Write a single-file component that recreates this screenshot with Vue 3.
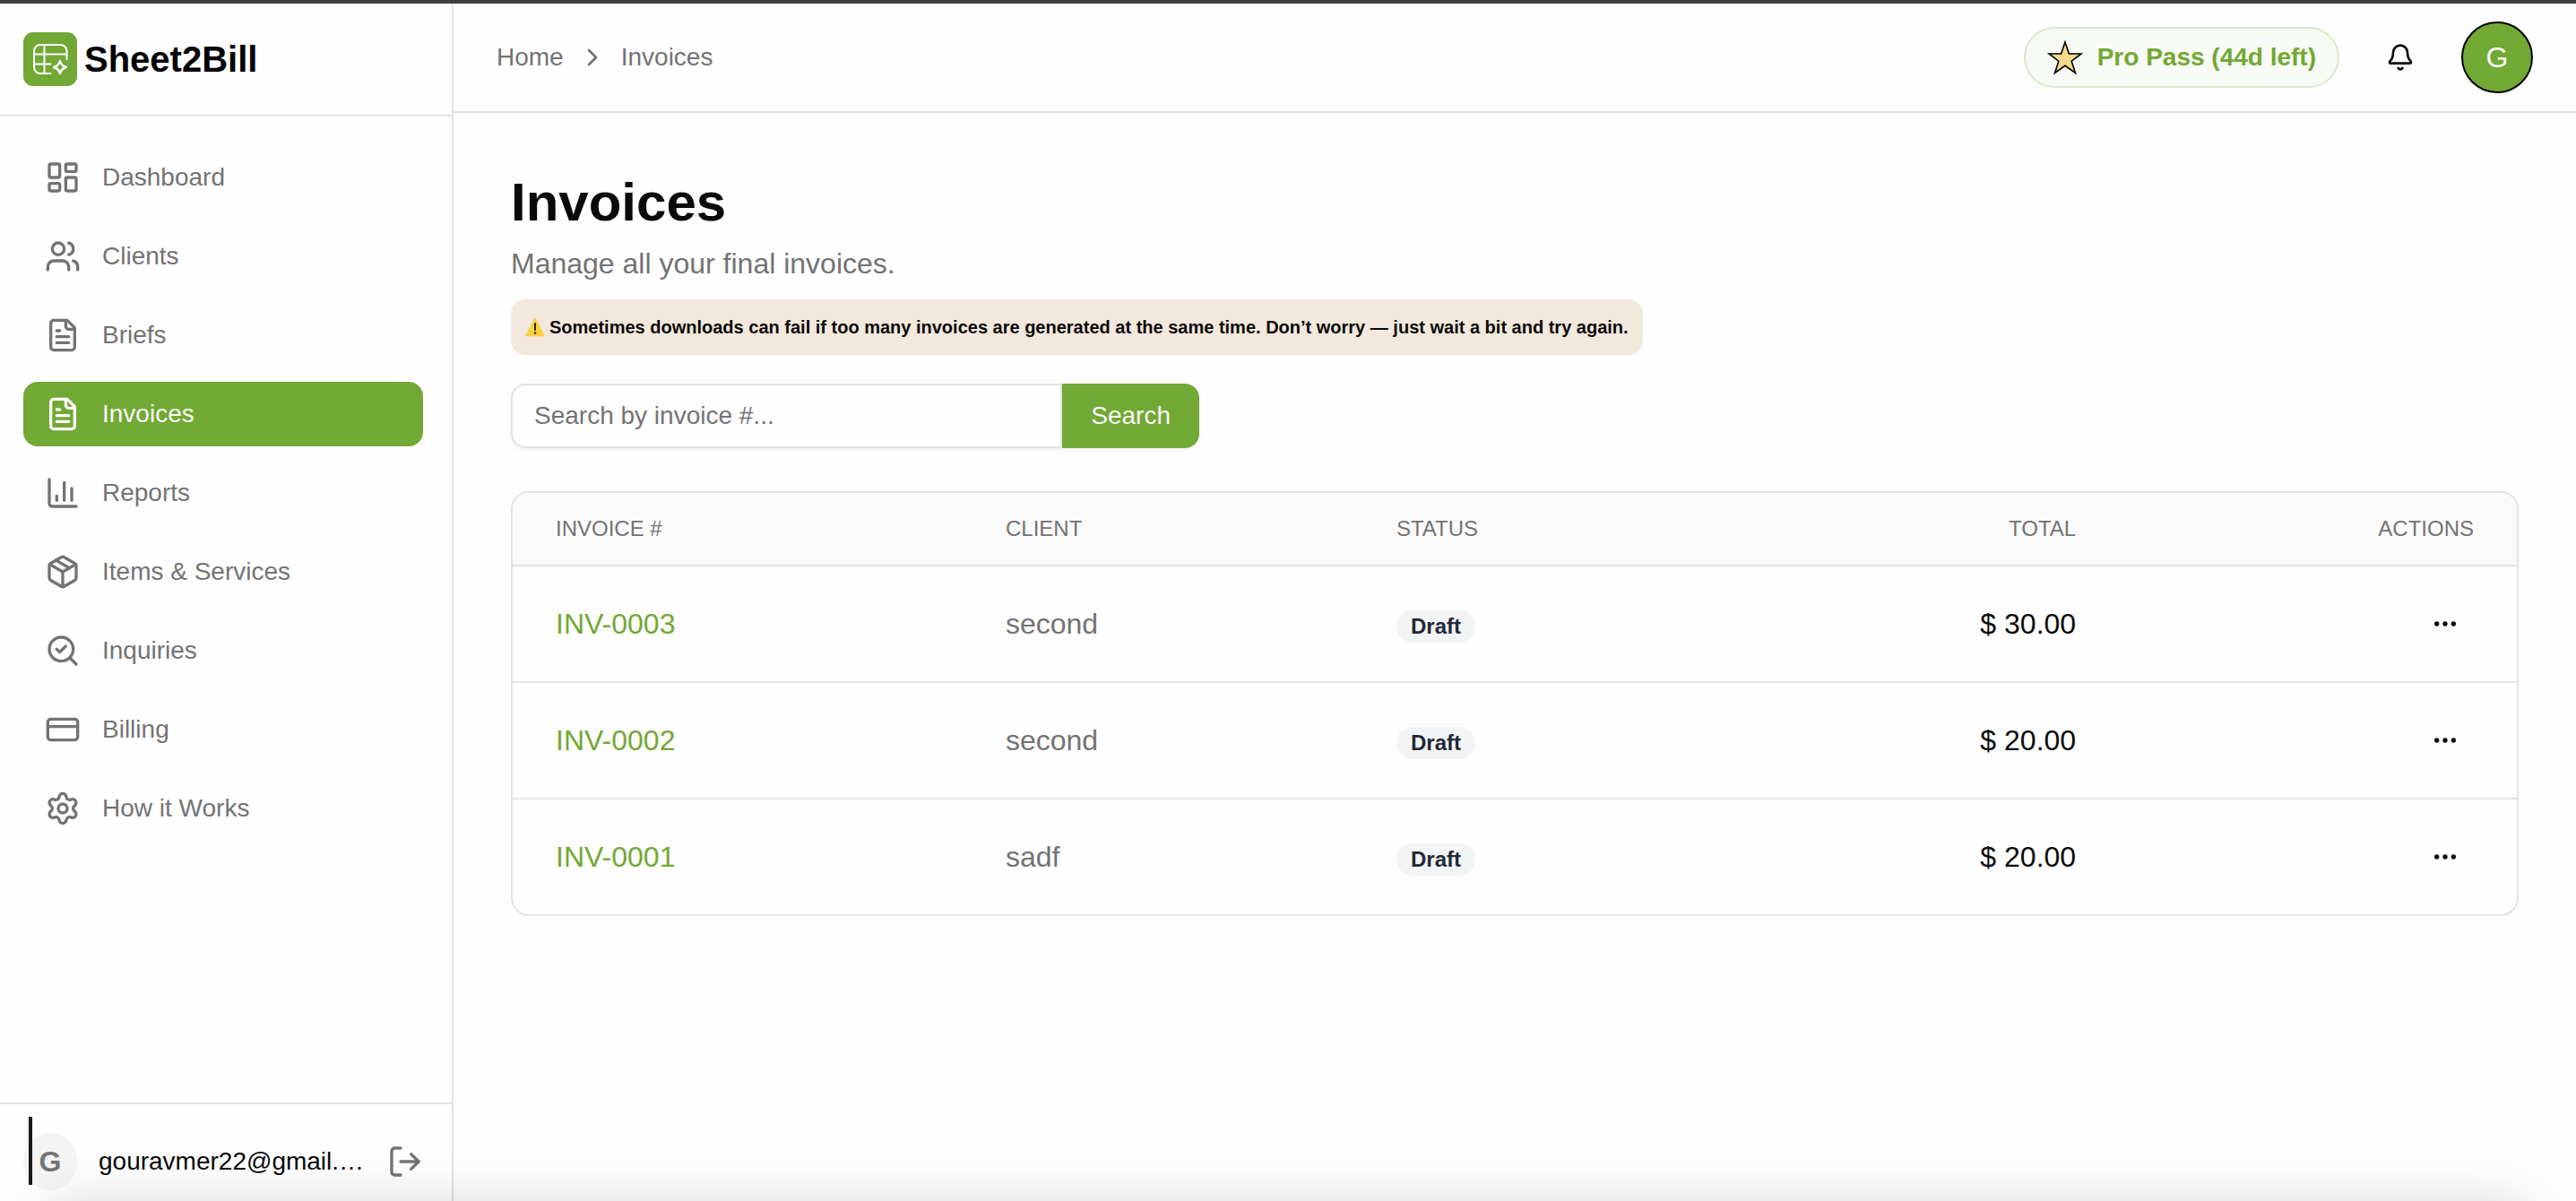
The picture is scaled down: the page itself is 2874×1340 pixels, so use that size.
<template>
  <div class="layout">
    <aside class="sidebar">
      <div class="brand">
        <svg class="brand-logo" viewBox="0 0 60 60" fill="none" stroke="#fff" stroke-width="2" stroke-linecap="round" stroke-linejoin="round">
          <rect width="60" height="60" rx="11" fill="#72a834" stroke="none" />
          <path d="M48.5 30V21a7 7 0 0 0-7-7H19a7 7 0 0 0-7 7V39a7 7 0 0 0 7 7H30.5" />
          <path d="M12 24.5H48.5M12 35.5H30.5M23.5 14V46" />
          <path d="M41 32q1.500 5.500 7 7q-5.500 1.500-7 7q-1.500-5.500-7-7q5.500-1.500 7-7z" stroke-width="2.4" />
        </svg>
        <span class="brand-name">Sheet2Bill</span>
      </div>

      <nav class="nav">
        <a v-for="item in navItems" :key="item.label" href="#" class="nav-item" :class="{ active: item.label === current }">
          <svg class="icon" viewBox="0 0 24 24"><path v-for="d in item.paths" :key="d" :d="d" /></svg>
          <span>{{ item.label }}</span>
        </a>
      </nav>

      <div class="account">
        <div class="account-avatar">G</div>
        <span class="caret"></span>
        <span class="account-email">{{ email }}</span>
        <button class="icon-btn" type="button" aria-label="Log out">
          <svg class="icon" viewBox="0 0 24 24">
            <path d="m16 17 5-5-5-5" /><path d="M21 12H9" /><path d="M9 21H5a2 2 0 0 1-2-2V5a2 2 0 0 1 2-2h4" />
          </svg>
        </button>
      </div>
    </aside>

    <div class="page">
      <header class="topbar">
        <nav class="crumbs" aria-label="Breadcrumb">
          <a href="#">Home</a>
          <svg class="icon icon-sm" viewBox="0 0 24 24"><path d="m9 18 6-6-6-6" /></svg>
          <a href="#">Invoices</a>
        </nav>
        <div class="topbar-right">
          <div class="pass">
            <svg class="star" viewBox="0 0 40 40">
              <path d="M20 3l4.400 13H38L27.200 24.200 31.500 37.500 20 29.300 8.500 37.500 12.800 24.200 2 16H15.600z" />
            </svg>
            <span>Pro Pass (44d left)</span>
          </div>
          <button class="bell" type="button" aria-label="Notifications">
            <svg class="icon icon-sm" viewBox="0 0 24 24">
              <path d="M10.268 21a2 2 0 0 0 3.464 0" />
              <path d="M3.262 15.326A1 1 0 0 0 4 17h16a1 1 0 0 0 .74-1.673C19.41 13.956 18 12.499 18 8A6 6 0 0 0 6 8c0 4.499-1.411 5.956-2.738 7.326" />
            </svg>
          </button>
          <button class="user" type="button">G</button>
        </div>
      </header>

      <main class="content">
        <h1>Invoices</h1>
        <p class="subtitle">Manage all your final invoices.</p>
        <div class="notice">
          <svg class="warn" viewBox="0 0 22 22">
            <path d="M11 1.500 21 20.500H1z" fill="#fbd03f" stroke="#fbd03f" stroke-width="1.500" stroke-linejoin="round" />
            <path d="M11 7v7" stroke="#2b2a26" stroke-width="2" stroke-linecap="round" />
            <circle cx="11" cy="17.500" r="1.300" fill="#2b2a26" />
          </svg>
          <span>Sometimes downloads can fail if too many invoices are generated at the same time. Don’t worry — just wait a bit and try again.</span>
        </div>

        <form class="search" @submit.prevent>
          <input v-model="query" type="text" placeholder="Search by invoice #..." aria-label="Search by invoice number" />
          <button type="submit">Search</button>
        </form>

        <div class="table-wrap">
          <table>
            <thead>
              <tr>
                <th class="col-invoice">Invoice #</th>
                <th class="col-client">Client</th>
                <th class="col-status">Status</th>
                <th class="col-total right">Total</th>
                <th class="right">Actions</th>
              </tr>
            </thead>
            <tbody>
              <tr v-for="inv in invoices" :key="inv.number">
                <td><a href="#" class="inv-link">{{ inv.number }}</a></td>
                <td class="muted">{{ inv.client }}</td>
                <td><span class="badge">{{ inv.status }}</span></td>
                <td class="right">{{ fmtTotal(inv.total) }}</td>
                <td>
                  <button class="more" type="button" :aria-label="'Actions for ' + inv.number">
                    <svg class="icon icon-sm" viewBox="0 0 24 24">
                      <circle cx="12" cy="12" r="1" /><circle cx="19" cy="12" r="1" /><circle cx="5" cy="12" r="1" />
                    </svg>
                  </button>
                </td>
              </tr>
            </tbody>
          </table>
        </div>
      </main>
    </div>

    <div class="bottom-shade"><div class="shade-source"></div></div>
  </div>
</template>

<script setup>
import { ref } from 'vue'

const current = ref('Invoices')
const query = ref('')
const email = 'gouravmer22@gmail.com'

const filePaths = [
  'M15 2H6a2 2 0 0 0-2 2v16a2 2 0 0 0 2 2h12a2 2 0 0 0 2-2V7Z',
  'M14 2v4a2 2 0 0 0 2 2h4',
  'M10 9H8',
  'M16 13H8',
  'M16 17H8',
]

const navItems = [
  {
    label: 'Dashboard',
    paths: [
      'M4 3h5a1 1 0 0 1 1 1v7a1 1 0 0 1-1 1H4a1 1 0 0 1-1-1V4a1 1 0 0 1 1-1z',
      'M15 3h5a1 1 0 0 1 1 1v3a1 1 0 0 1-1 1h-5a1 1 0 0 1-1-1V4a1 1 0 0 1 1-1z',
      'M15 12h5a1 1 0 0 1 1 1v7a1 1 0 0 1-1 1h-5a1 1 0 0 1-1-1v-7a1 1 0 0 1 1-1z',
      'M4 16h5a1 1 0 0 1 1 1v3a1 1 0 0 1-1 1H4a1 1 0 0 1-1-1v-3a1 1 0 0 1 1-1z',
    ],
  },
  {
    label: 'Clients',
    paths: [
      'M16 21v-2a4 4 0 0 0-4-4H6a4 4 0 0 0-4 4v2',
      'M16 3.128a4 4 0 0 1 0 7.744',
      'M22 21v-2a4 4 0 0 0-3-3.87',
      'M5 7a4 4 0 1 0 8 0a4 4 0 1 0-8 0',
    ],
  },
  { label: 'Briefs', paths: filePaths },
  { label: 'Invoices', paths: filePaths },
  { label: 'Reports', paths: ['M3 3v16a2 2 0 0 0 2 2h16', 'M18 17V9', 'M13 17V5', 'M8 17v-3'] },
  {
    label: 'Items & Services',
    paths: [
      'M11 21.73a2 2 0 0 0 2 0l7-4A2 2 0 0 0 21 16V8a2 2 0 0 0-1-1.73l-7-4a2 2 0 0 0-2 0l-7 4A2 2 0 0 0 3 8v8a2 2 0 0 0 1 1.73z',
      'M12 22V12',
      'M3.29 7 12 12l8.71-5',
      'm7.5 4.27 9 5.15',
    ],
  },
  { label: 'Inquiries', paths: ['m8 11 2 2 4-4', 'M3 11a8 8 0 1 0 16 0a8 8 0 1 0-16 0', 'm21 21-4.3-4.3'] },
  { label: 'Billing', paths: ['M4 5h16a2 2 0 0 1 2 2v10a2 2 0 0 1-2 2H4a2 2 0 0 1-2-2V7a2 2 0 0 1 2-2z', 'M2 10h20'] },
  {
    label: 'How it Works',
    paths: [
      'M9.671 4.136a2.34 2.34 0 0 1 4.659 0 2.34 2.34 0 0 0 3.319 1.915 2.34 2.34 0 0 1 2.33 4.033 2.34 2.34 0 0 0 0 3.831 2.34 2.34 0 0 1-2.33 4.033 2.34 2.34 0 0 0-3.319 1.915 2.34 2.34 0 0 1-4.659 0 2.34 2.34 0 0 0-3.32-1.915 2.34 2.34 0 0 1-2.33-4.033 2.34 2.34 0 0 0 0-3.831A2.34 2.34 0 0 1 6.35 6.051a2.34 2.34 0 0 0 3.319-1.915',
      'M9 12a3 3 0 1 0 6 0a3 3 0 1 0-6 0',
    ],
  },
]

const invoices = ref([
  { number: 'INV-0003', client: 'second', status: 'Draft', total: 30 },
  { number: 'INV-0002', client: 'second', status: 'Draft', total: 20 },
  { number: 'INV-0001', client: 'sadf', status: 'Draft', total: 20 },
])

function fmtTotal(v) { return '$ ' + v.toFixed(2) }
</script>

<style>
body { margin: 0; background: #fefefe; }
</style>

<style scoped>
.layout { display: flex; min-height: 100vh; box-sizing: border-box; border-top: 4px solid #3f3f3f; position: relative; font-family: "Liberation Sans", Arial, sans-serif; font-size: 28px; line-height: 40px; color: #0a0a0a; }
.layout *, .layout *::before { box-sizing: border-box; }
a { color: inherit; text-decoration: none; }
button { border: 0; padding: 0; background: none; font: inherit; color: inherit; cursor: pointer; }
.icon { width: 40px; height: 40px; flex: none; display: block; fill: none; stroke: currentColor; stroke-width: 2; stroke-linecap: round; stroke-linejoin: round; }
.icon-sm { width: 32px; height: 32px; }

/* sidebar */
.sidebar { width: 506px; flex: none; display: flex; flex-direction: column; border-right: 2px solid #e3e3e3; }
.brand { display: flex; align-items: center; gap: 8px; padding: 32px 26px; border-bottom: 2px solid #e3e3e3; }
.brand-logo { width: 60px; height: 60px; }
.brand-name { font-size: 40px; font-weight: bold; color: #000; }
.nav { flex: 1; display: flex; flex-direction: column; gap: 16px; padding: 32px 32px 32px 26px; }
.nav-item { display: flex; align-items: center; gap: 24px; padding: 16px 24px; border-radius: 16px; color: #737373; }
.nav-item.active { background: #72a834; color: #fafafa; }
.account { position: relative; display: flex; align-items: center; gap: 24px; padding: 32px 32px 12px 26px; border-top: 2px solid #e3e3e3; }
.account-avatar { width: 60px; height: 64px; flex: none; display: flex; align-items: center; justify-content: center; border-radius: 50%; background: #f4f4f4; color: #737373; font-size: 32px; font-weight: bold; }
.caret { position: absolute; left: 32px; top: 14px; width: 4px; height: 76px; background: #1a1a1a; }
.account-email { flex: 1; min-width: 0; white-space: nowrap; overflow: hidden; text-overflow: ellipsis; }
.icon-btn { flex: none; color: #737373; }

/* header */
.page { flex: 1; min-width: 0; }
.topbar { display: flex; align-items: center; justify-content: space-between; padding: 20px 48px; border-bottom: 2px solid #e3e3e3; }
.crumbs { display: flex; align-items: center; gap: 16px; color: #737373; }
.topbar-right { display: flex; align-items: center; gap: 28px; }
.pass { display: flex; align-items: center; gap: 16px; padding: 12px 24px; border: 2px solid #dbe9cb; border-radius: 34px; background: #f8faf5; color: #72a834; font-weight: bold; }
.star { width: 40px; height: 40px; fill: #f8d88a; stroke: #000; stroke-width: 1.6; }
.bell { width: 80px; height: 80px; display: flex; align-items: center; justify-content: center; }
.user { width: 80px; height: 80px; border: 2px solid #000; border-radius: 50%; background: #72a834; color: #fafafa; font-size: 32px; }

/* content */
.content { padding: 64px; }
h1 { margin: 0; font-size: 60px; line-height: 72px; }
.subtitle { margin: 8px 0 16px; font-size: 32px; line-height: 48px; color: #737373; }
.notice { width: fit-content; display: flex; align-items: center; gap: 5px; padding: 16px; border-radius: 16px; background: #f2e8dc; font-size: 20px; line-height: 30px; font-weight: bold; }
.warn { width: 22px; height: 22px; flex: none; }
.search { display: flex; max-width: 768px; margin: 32px 0 48px; border-radius: 16px; box-shadow: 0 2px 4px rgba(0,0,0,0.05); }
.search input { flex: 1; min-width: 0; height: 72px; padding: 0 24px; border: 2px solid #e3e3e3; border-radius: 16px 0 0 16px; background: #fefefe; font: inherit; color: inherit; outline: none; }
.search input::placeholder { color: #737373; opacity: 1; }
.search button { padding: 0 32px; border-radius: 0 16px 16px 0; background: #72a834; color: #fafafa; }

/* invoices table */
.table-wrap { border: 2px solid #e3e3e3; border-radius: 20px; overflow: hidden; }
table { width: 100%; table-layout: fixed; border-collapse: separate; border-spacing: 0; }
.col-invoice { width: 22.45%; }
.col-client { width: 19.5%; }
.col-status { width: 19.5%; }
.col-total { width: 18.7%; }
th { padding: 24px 48px; border-bottom: 2px solid #e3e3e3; background: #fafafa; color: #737373; font-size: 24px; line-height: 32px; font-weight: normal; text-align: left; text-transform: uppercase; }
td { padding: 32px 48px; border-bottom: 2px solid #e3e3e3; font-size: 32px; line-height: 48px; }
tbody tr:last-child td { border-bottom: 0; }
.right { text-align: right; }
.muted { color: #737373; }
.inv-link { color: #72a834; }
.badge { display: inline-block; padding: 0 16px; border-radius: 18px; background: #f3f4f6; color: #1f2937; font-size: 24px; line-height: 36px; font-weight: bold; }
.more { width: 64px; height: 64px; margin-left: auto; display: flex; align-items: center; justify-content: center; }

/* soft shadow rising from the lower edge */
.bottom-shade { position: absolute; left: 0; right: 0; bottom: 0; height: 80px; overflow: hidden; pointer-events: none; }
.shade-source { position: absolute; left: 48px; right: 48px; top: 80px; height: 80px; border-radius: 40px; box-shadow: 0 0 56px rgba(0,0,0,0.14); }
</style>
